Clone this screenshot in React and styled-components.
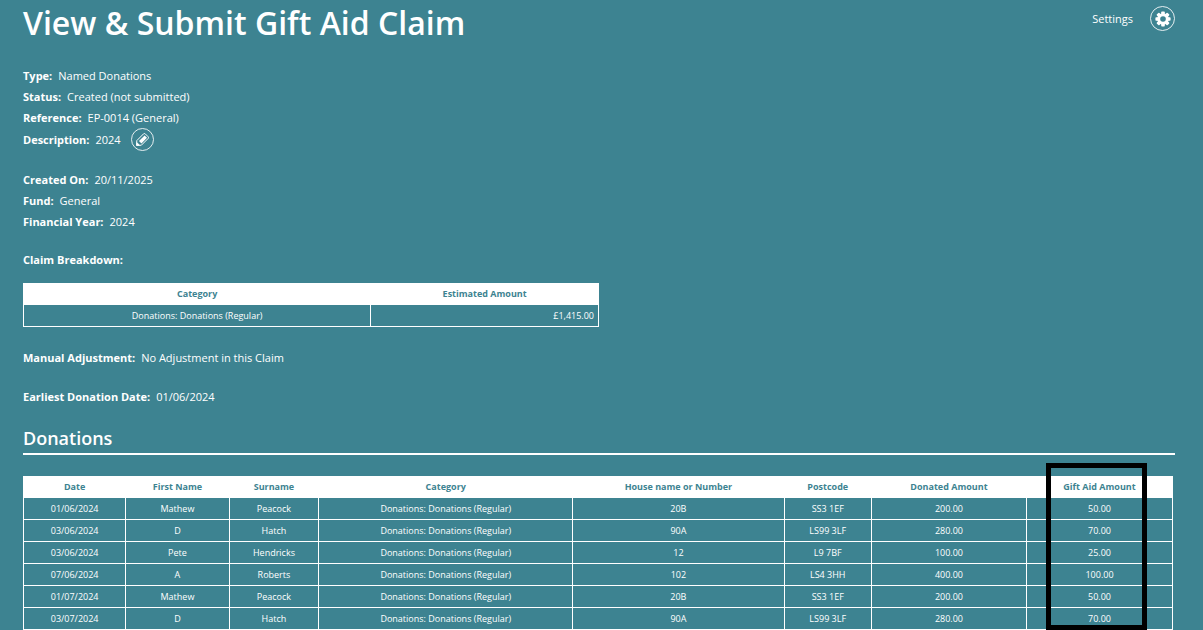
import React from "react";
import styled, { createGlobalStyle } from "styled-components";

const breakdown = [
  { category: "Donations: Donations (Regular)", amount: "£1,415.00" },
];

const columns = [
  { title: "Date", width: "8.9%" },
  { title: "First Name", width: "9%" },
  { title: "Surname", width: "7.8%" },
  { title: "Category", width: "22.1%" },
  { title: "House name or Number", width: "18.4%" },
  { title: "Postcode", width: "7.6%" },
  { title: "Donated Amount", width: "13.5%" },
  { title: "Gift Aid Amount", width: "12.7%", highlight: true },
];

const regular = "Donations: Donations (Regular)";

const donations = [
  ["01/06/2024", "Mathew", "Peacock", regular, "20B", "SS3 1EF", "200.00", "50.00"],
  ["03/06/2024", "D", "Hatch", regular, "90A", "LS99 3LF", "280.00", "70.00"],
  ["03/06/2024", "Pete", "Hendricks", regular, "12", "L9 7BF", "100.00", "25.00"],
  ["07/06/2024", "A", "Roberts", regular, "102", "LS4 3HH", "400.00", "100.00"],
  ["01/07/2024", "Mathew", "Peacock", regular, "20B", "SS3 1EF", "200.00", "50.00"],
  ["03/07/2024", "D", "Hatch", regular, "90A", "LS99 3LF", "280.00", "70.00"],
];

const GearIcon = () => (
  <svg width="16" height="16" viewBox="0 0 16 16" aria-hidden="true">
    {[0, 45, 90, 135].map((angle) => (
      <rect
        key={angle}
        x="6.2"
        y="0.4"
        width="3.6"
        height="15.2"
        rx="0.8"
        fill="#fff"
        transform={`rotate(${angle} 8 8)`}
      />
    ))}
    <circle cx="8" cy="8" r="5.8" fill="#fff" />
    <circle cx="8" cy="8" r="2.8" fill="#3d8391" />
  </svg>
);

const PencilIcon = () => (
  <svg width="15" height="15" viewBox="0 0 15 15" aria-hidden="true">
    <path
      d="M1.5 13.5 L1.8 8.6 L8.6 1.8 Q9.4 1.2 10.2 1.8 L13.2 4.8 Q13.8 5.6 13.2 6.4 L6.4 13.2 Z"
      fill="none"
      stroke="#fff"
      strokeLinejoin="round"
    />
    <path d="M5.2 10.2 L10.8 4.6" fill="none" stroke="#fff" strokeWidth="3.4" />
    <path d="M1.5 13.5 L1.7 10 L5 13.3 Z" fill="#fff" />
  </svg>
);

const Field = ({ label, children }) => (
  <Line>
    <dt>{label}</dt>
    <dd>{children}</dd>
  </Line>
);

const App = () => {
  return (
    <>
      <GlobalStyle />
      <Page>
        <Header>
          <h1>View &amp; Submit Gift Aid Claim</h1>
          <Settings href="#settings">
            Settings
            <Round as="span" $size={25}>
              <GearIcon />
            </Round>
          </Settings>
        </Header>
        <Details>
          <Field label="Type:">Named Donations</Field>
          <Field label="Status:">Created (not submitted)</Field>
          <Field label="Reference:">EP-0014 (General)</Field>
          <Field label="Description:">
            2024
            <Round type="button" aria-label="Edit description" $size={23}>
              <PencilIcon />
            </Round>
          </Field>
        </Details>
        <Details>
          <Field label="Created On:">20/11/2025</Field>
          <Field label="Fund:">General</Field>
          <Field label="Financial Year:">2024</Field>
        </Details>
        <SubTitle>Claim Breakdown:</SubTitle>
        <Table $width="50%">
          <thead>
            <tr>
              <Th $width="60.4%">Category</Th>
              <Th>Estimated Amount</Th>
            </tr>
          </thead>
          <tbody>
            {breakdown.map((row) => (
              <tr key={row.category}>
                <Td>{row.category}</Td>
                <Td $align="right">{row.amount}</Td>
              </tr>
            ))}
          </tbody>
        </Table>
        <Details>
          <Field label="Manual Adjustment:">No Adjustment in this Claim</Field>
        </Details>
        <Details>
          <Field label="Earliest Donation Date:">01/06/2024</Field>
        </Details>
        <SectionTitle>Donations</SectionTitle>
        <Table $width="calc(100% - 2px)">
          <thead>
            <tr>
              {columns.map((col) => (
                <Th key={col.title} $width={col.width}>
                  {col.title}
                  {col.highlight && <Highlight />}
                </Th>
              ))}
            </tr>
          </thead>
          <tbody>
            {donations.map((row, i) => (
              <tr key={i}>
                {row.map((cell, j) => (
                  <Td key={j}>{cell}</Td>
                ))}
              </tr>
            ))}
          </tbody>
        </Table>
      </Page>
    </>
  );
};

const GlobalStyle = createGlobalStyle`
  * {
    box-sizing: border-box;
    margin: 0;
    padding: 0;
  }
  html {
    scrollbar-width: none;
  }
  body {
    background: #3d8391;
    color: #fff;
    font-family: "Open Sans", sans-serif;
    font-size: 11px;
  }
`;

const Page = styled.main`
  min-height: 100vh;
  padding: 0 28px 0 23px;
`;

const Header = styled.header`
  display: flex;
  justify-content: space-between;
  align-items: flex-start;
  margin-bottom: 20px;
  h1 {
    font-size: 32px;
    font-weight: 600;
    line-height: 45px;
  }
`;

const Settings = styled.a`
  display: flex;
  align-items: center;
  gap: 17px;
  margin-top: 6px;
  color: #fff;
  text-decoration: none;
`;

const Round = styled.button`
  display: flex;
  align-items: center;
  justify-content: center;
  width: ${(props) => props.$size}px;
  height: ${(props) => props.$size}px;
  border: 1px solid rgba(255, 255, 255, 0.85);
  border-radius: 50%;
  background: none;
  cursor: pointer;
`;

const Details = styled.dl`
  margin-bottom: 18px;
`;

const Line = styled.div`
  display: flex;
  align-items: center;
  gap: 6px;
  line-height: 21px;
  dt {
    font-weight: 700;
  }
  dd {
    display: flex;
    align-items: center;
    gap: 10px;
  }
`;

const SubTitle = styled.h3`
  margin-bottom: 13px;
  font-size: 11px;
  font-weight: 700;
  line-height: 20px;
`;

const SectionTitle = styled.h2`
  margin-bottom: 21px;
  padding-bottom: 2px;
  border-bottom: 2px solid #fff;
  font-size: 18px;
  font-weight: 600;
  line-height: 26px;
`;

const Table = styled.table`
  width: ${(props) => props.$width};
  margin-bottom: 20px;
  border-collapse: collapse;
  table-layout: fixed;
`;

const Th = styled.th`
  position: relative;
  width: ${(props) => props.$width};
  height: 21px;
  border: 1px solid #fff;
  background: #fff;
  color: #3d8391;
  font-size: 9px;
  font-weight: 700;
  line-height: 14px;
`;

const Td = styled.td`
  height: 22px;
  padding: 0 4px;
  border: 1px solid #fff;
  font-size: 9px;
  line-height: 14px;
  text-align: ${(props) => props.$align || "center"};
`;

/* frame drawn over the gift aid column */
const Highlight = styled.span`
  position: absolute;
  top: -14px;
  left: 19px;
  width: 101px;
  height: 167px;
  border: 5px solid #000;
  pointer-events: none;
`;

export default App;
